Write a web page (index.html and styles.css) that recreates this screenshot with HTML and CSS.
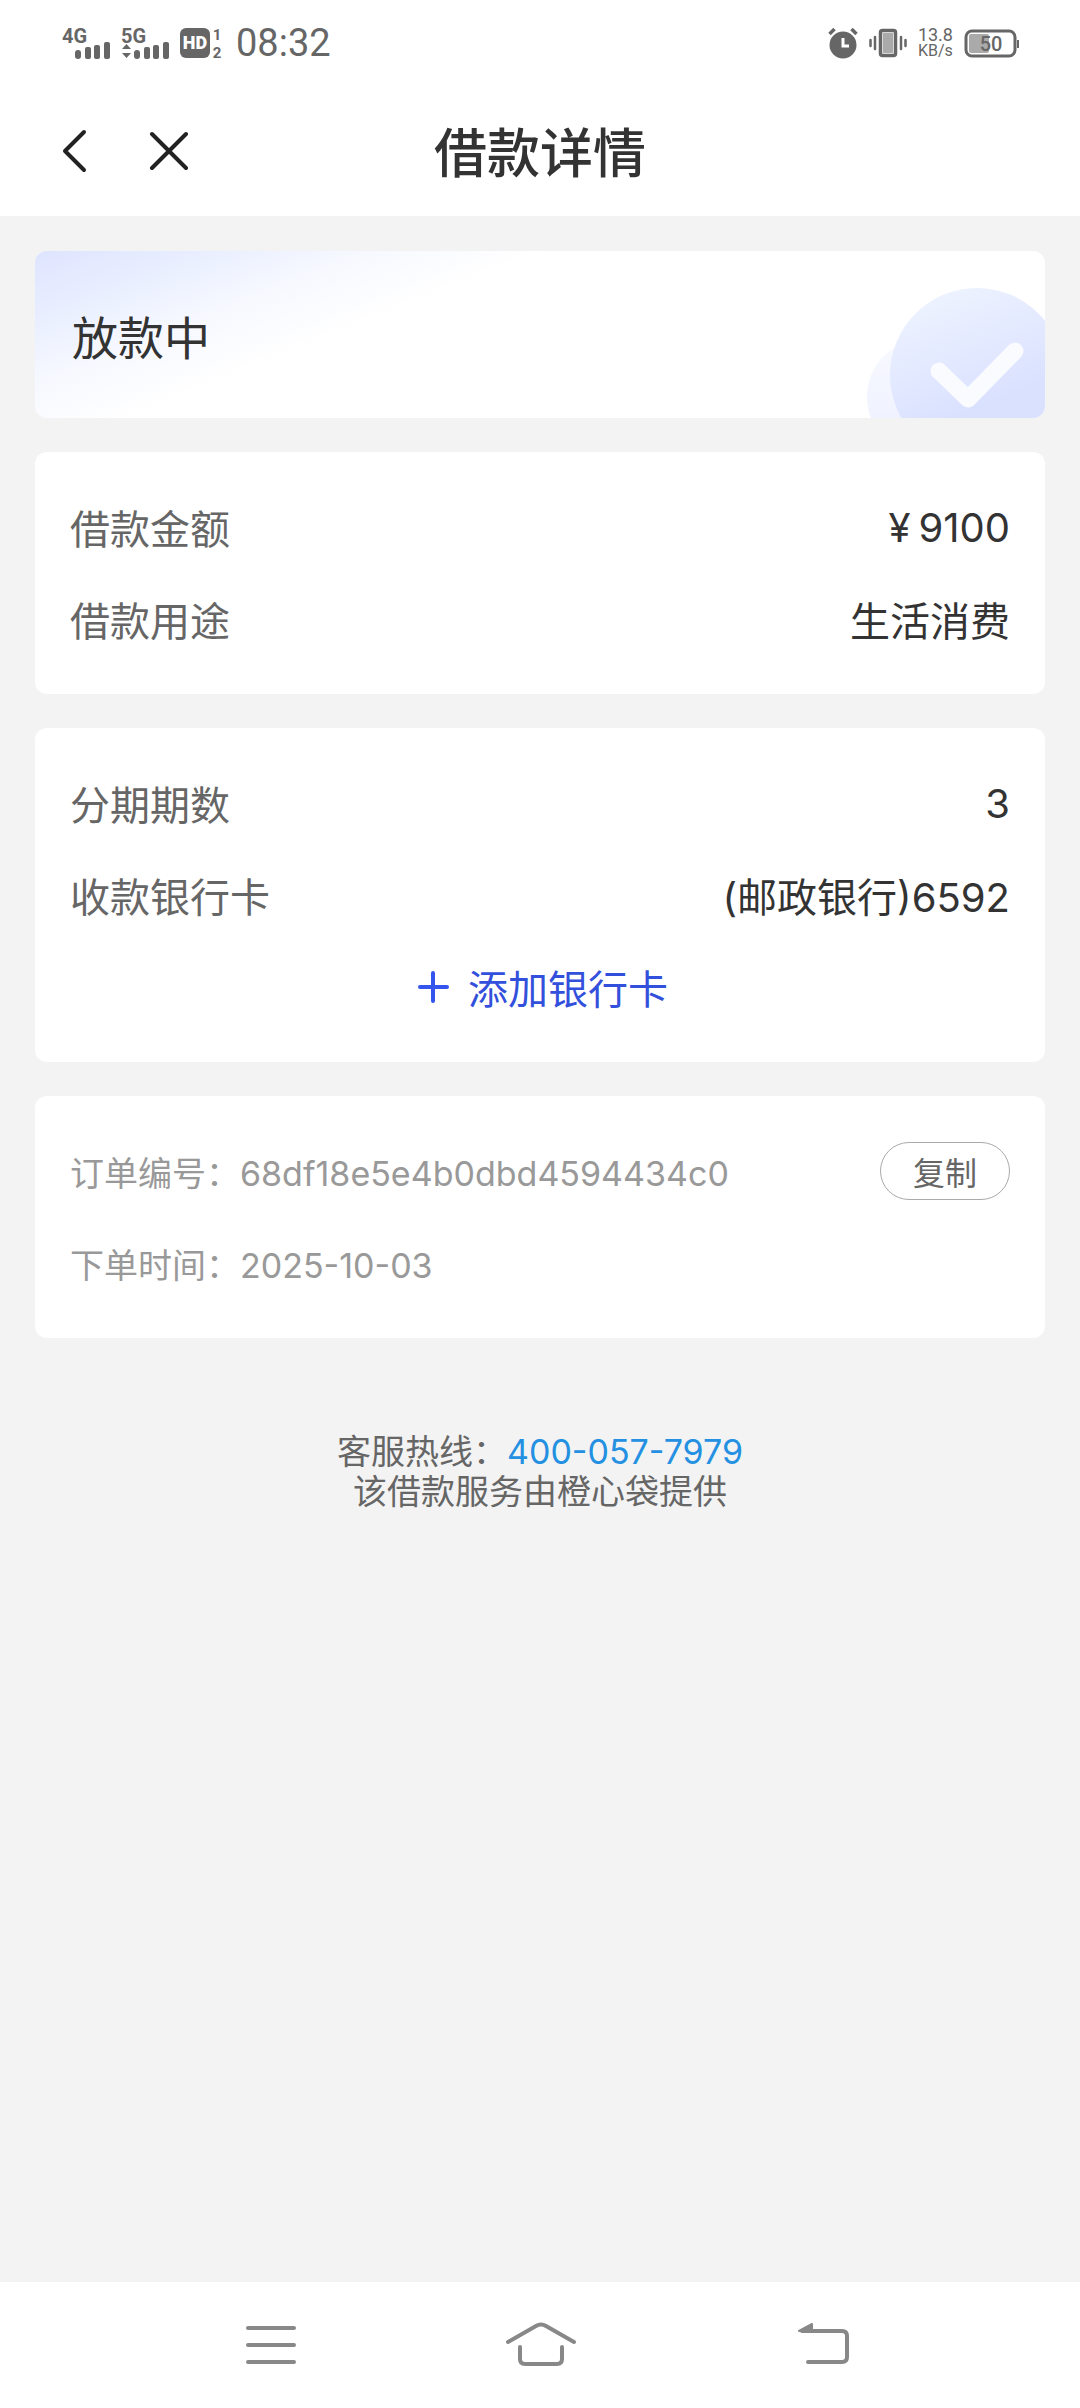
FILE: index.html
```html
<!DOCTYPE html>
<html lang="zh-CN">
<head>
    <meta charset="UTF-8">
    <meta name="viewport" content="width=device-width, initial-scale=1.0">
    <title>借款详情</title>
    <link rel="stylesheet" href="styles.css">
</head>
<body>
    <div class="status-bar">
        <div class="status-left">
            <svg class="signal" width="50" height="48" viewBox="0 -8 50 48">
                <text x="0" y="16" class="net">4G</text>
                <rect x="13" y="23" width="6" height="9" rx="3"/>
                <rect x="23" y="20" width="6" height="12" rx="2"/>
                <rect x="32" y="18" width="6" height="14" rx="2"/>
                <rect x="42" y="15" width="6" height="17" rx="2"/>
            </svg>
            <svg class="signal" width="50" height="48" viewBox="0 -8 50 48">
                <text x="0" y="16" class="net">5G</text>
                <path d="M1 22l4.500-5 4.500 5zM1 26h9l-4.500 5z"/>
                <rect x="13" y="23" width="6" height="9" rx="3"/>
                <rect x="23" y="20" width="6" height="12" rx="2"/>
                <rect x="32" y="18" width="6" height="14" rx="2"/>
                <rect x="42" y="15" width="6" height="17" rx="2"/>
            </svg>
            <svg class="hd" width="44" height="48" viewBox="0 -8 44 48">
                <rect x="0" y="1" width="30" height="30" rx="6"/>
                <text x="15" y="22" class="hd-text">HD</text>
                <text x="37" y="13" class="sim">1</text>
                <text x="37" y="31" class="sim">2</text>
            </svg>
            <span class="time">08:32</span>
        </div>
        <div class="status-right">
            <svg width="30" height="32" viewBox="0 0 30 32">
                <circle cx="15" cy="18" r="13.500"/>
                <path d="M1.500 7l5-5M28.500 7l-5-5" stroke="#666" stroke-width="3.500"/>
                <path d="M15 11v8h6" fill="none" stroke="#fff" stroke-width="3"/>
            </svg>
            <svg width="38" height="32" viewBox="0 0 38 32">
                <rect x="11.500" y="3.500" width="15" height="25" rx="2" fill="#fff" stroke="#666" stroke-width="3.500"/>
                <rect x="14" y="6" width="10" height="20" fill="#aaa"/>
                <path d="M1.500 13v6M6 10v12M32 10v12M36.500 13v6" stroke="#666" stroke-width="2.500" stroke-linecap="round"/>
            </svg>
            <div class="speed"><span class="speed-value">13.8</span><span>KB/s</span></div>
            <svg width="56" height="32" viewBox="0 0 56 32">
                <rect x="2" y="4" width="49" height="25" rx="6" fill="#fff" stroke="#666" stroke-width="3"/>
                <rect x="5" y="7" width="20" height="19" rx="2" fill="#aaa"/>
                <path d="M54 13v8" stroke="#666" stroke-width="2"/>
                <text x="27" y="24" class="battery-text">50</text>
            </svg>
        </div>
    </div>

    <header class="header">
        <div class="header-buttons">
            <button class="icon-button" aria-label="返回">
                <svg width="40" height="48" viewBox="0 0 40 48">
                    <path d="M32 5L13 24l19 19"/>
                </svg>
            </button>
            <button class="icon-button" aria-label="关闭">
                <svg width="40" height="48" viewBox="0 0 40 48">
                    <path d="M4 7l34 34M38 7L4 41"/>
                </svg>
            </button>
        </div>
        <h1>借款详情</h1>
    </header>

    <main class="content">
        <section class="card status-card">
            <h2>放款中</h2>
            <svg class="status-icon" width="178" height="130" viewBox="0 0 178 130">
                <defs>
                    <linearGradient id="big" x1="0.2" y1="0" x2="0.6" y2="1">
                        <stop offset="0" stop-color="#eff4ff"/>
                        <stop offset="0.700" stop-color="#dae1ff"/>
                    </linearGradient>
                    <linearGradient id="small" x1="0" y1="0" x2="0" y2="1">
                        <stop offset="0" stop-color="#f8f9ff"/>
                        <stop offset="1" stop-color="#ecf0ff"/>
                    </linearGradient>
                </defs>
                <circle cx="58" cy="109" r="58" fill="url(#small)"/>
                <circle cx="110" cy="87" r="87" fill="url(#big)"/>
                <path d="M72 83l29 28 47-48" fill="none" stroke="#f9fbff" stroke-width="17" stroke-linecap="round" stroke-linejoin="round"/>
            </svg>
        </section>

        <section class="card">
            <div class="row">
                <span class="label">借款金额</span>
                <span class="value"><span class="yen">¥</span>9100</span>
            </div>
            <div class="row">
                <span class="label">借款用途</span>
                <span class="value">生活消费</span>
            </div>
        </section>

        <section class="card">
            <div class="row">
                <span class="label">分期期数</span>
                <span class="value">3</span>
            </div>
            <div class="row">
                <span class="label">收款银行卡</span>
                <span class="value">(邮政银行)6592</span>
            </div>
            <button class="add-card">
                <svg width="42" height="40" viewBox="0 0 42 40">
                    <path d="M8 20h27M21 6v28"/>
                </svg>
                添加银行卡
            </button>
        </section>

        <section class="card order">
            <div class="row">
                <span>订单编号：68df18e5e4b0dbd4594434c0</span>
                <button class="copy">复制</button>
            </div>
            <div class="row">
                <span>下单时间：2025-10-03</span>
            </div>
        </section>

        <footer class="footer">
            <p>客服热线：<a href="tel:400-057-7979">400-057-7979</a></p>
            <p>该借款服务由橙心袋提供</p>
        </footer>
    </main>

    <nav class="nav-bar">
        <button aria-label="菜单">
            <svg width="80" height="60" viewBox="0 0 80 60">
                <path d="M18 13h46M18 30h46M18 47h46"/>
            </svg>
        </button>
        <button aria-label="主页">
            <svg width="80" height="60" viewBox="0 0 80 60">
                <path d="M8 27l28-16q5-3 10 0l28 16M20 32v12q0 5 5 5h32q5 0 5-5V32"/>
            </svg>
        </button>
        <button aria-label="后退">
            <svg width="80" height="60" viewBox="0 0 80 60">
                <path d="M32 16h40q5 0 5 5v21q0 5-5 5H38"/>
                <path class="tip" d="M29 16l13-7v7z"/>
            </svg>
        </button>
    </nav>
</body>
</html>
```
FILE: styles.css
```css
* {
    box-sizing: border-box;
}
body {
    font-family: Inter, "Noto Sans CJK SC", sans-serif;
    margin: 0;
    min-height: 100vh;
    display: flex;
    flex-direction: column;
    background: #f3f3f3;
    color: #333;
}
h1, h2, p {
    margin: 0;
}
button {
    font-family: inherit;
    padding: 0;
    border: none;
    background: none;
    cursor: pointer;
}
svg {
    display: block;
    flex-shrink: 0;
}

/* phone status bar */
.status-bar {
    display: flex;
    justify-content: space-between;
    align-items: center;
    height: 85px;
    padding: 0 60px 0 62px;
    background: #fff;
    color: #666;
    font-family: Roboto, sans-serif;
}
.status-left, .status-right {
    display: flex;
    align-items: center;
}
.status-left {
    gap: 9px;
}
.status-right {
    gap: 11px;
}
.status-bar svg {
    fill: #666;
}
.net {
    font-size: 20px;
    font-weight: 700;
}
.hd-text {
    font-size: 18px;
    font-weight: 900;
    fill: #fff;
    text-anchor: middle;
}
.sim {
    font-size: 15px;
    font-weight: 700;
    text-anchor: middle;
}
.time {
    font-size: 38px;
    margin-left: 3px;
}
.speed {
    display: flex;
    flex-direction: column;
    align-items: center;
    font-size: 16px;
    line-height: 16px;
}
.speed-value {
    font-size: 18px;
}
.battery-text {
    font-size: 20px;
    font-weight: 500;
    text-anchor: middle;
}

/* title bar */
.header {
    display: grid;
    grid-template-columns: 1fr auto 1fr;
    align-items: center;
    height: 131px;
    padding: 0 52px;
    background: #fff;
}
.header-buttons {
    display: flex;
    gap: 56px;
}
.icon-button svg {
    fill: none;
    stroke: #222;
    stroke-width: 4;
    stroke-linecap: round;
    stroke-linejoin: round;
}
.header h1 {
    padding-top: 6px;
    font-size: 53px;
    font-weight: 500;
    line-height: 80px;
}

.content {
    flex: 1;
    display: flex;
    flex-direction: column;
    gap: 34px;
    padding: 35px;
}
.card {
    background: #fff;
    border-radius: 12px;
    padding: 29px 35px;
}
.status-card {
    display: flex;
    justify-content: space-between;
    align-items: flex-end;
    height: 167px;
    padding: 0 0 0 37px;
    overflow: hidden;
    background: linear-gradient(158deg, #dfe4ff 0, #e8eeff 60px, #f6f8ff 120px, #fff 190px);
}
.status-card h2 {
    align-self: center;
    font-size: 46px;
    font-weight: 400;
}
.row {
    display: flex;
    justify-content: space-between;
    align-items: center;
    height: 92px;
    font-size: 40px;
}
.label {
    color: #666;
}
.yen {
    margin-right: 8px;
}
.add-card {
    display: flex;
    justify-content: center;
    align-items: center;
    gap: 14px;
    width: 100%;
    height: 92px;
    font-size: 40px;
    color: #3350dc;
}
.add-card svg {
    fill: none;
    stroke: #3355ee;
    stroke-width: 4;
    stroke-linecap: round;
}
.order .row {
    font-size: 34px;
    color: #999;
}
.copy {
    width: 130px;
    height: 58px;
    border: 1px solid #aaa;
    border-radius: 29px;
    font-size: 32px;
    color: #666;
}
.footer {
    padding-top: 60px;
    text-align: center;
    font-size: 34px;
    line-height: 40px;
    color: #666;
}
.footer a {
    color: #2490e2;
    text-decoration: none;
}

/* system navigation */
.nav-bar {
    display: grid;
    grid-template-columns: repeat(3, 1fr);
    height: 126px;
    padding: 0 12.5%;
    background: #fff;
}
.nav-bar button {
    display: flex;
    justify-content: center;
    align-items: center;
}
.nav-bar svg {
    fill: none;
    stroke: #888;
    stroke-width: 4;
    stroke-linecap: round;
    stroke-linejoin: round;
}
.nav-bar .tip {
    fill: #888;
    stroke-width: 2;
}
```
